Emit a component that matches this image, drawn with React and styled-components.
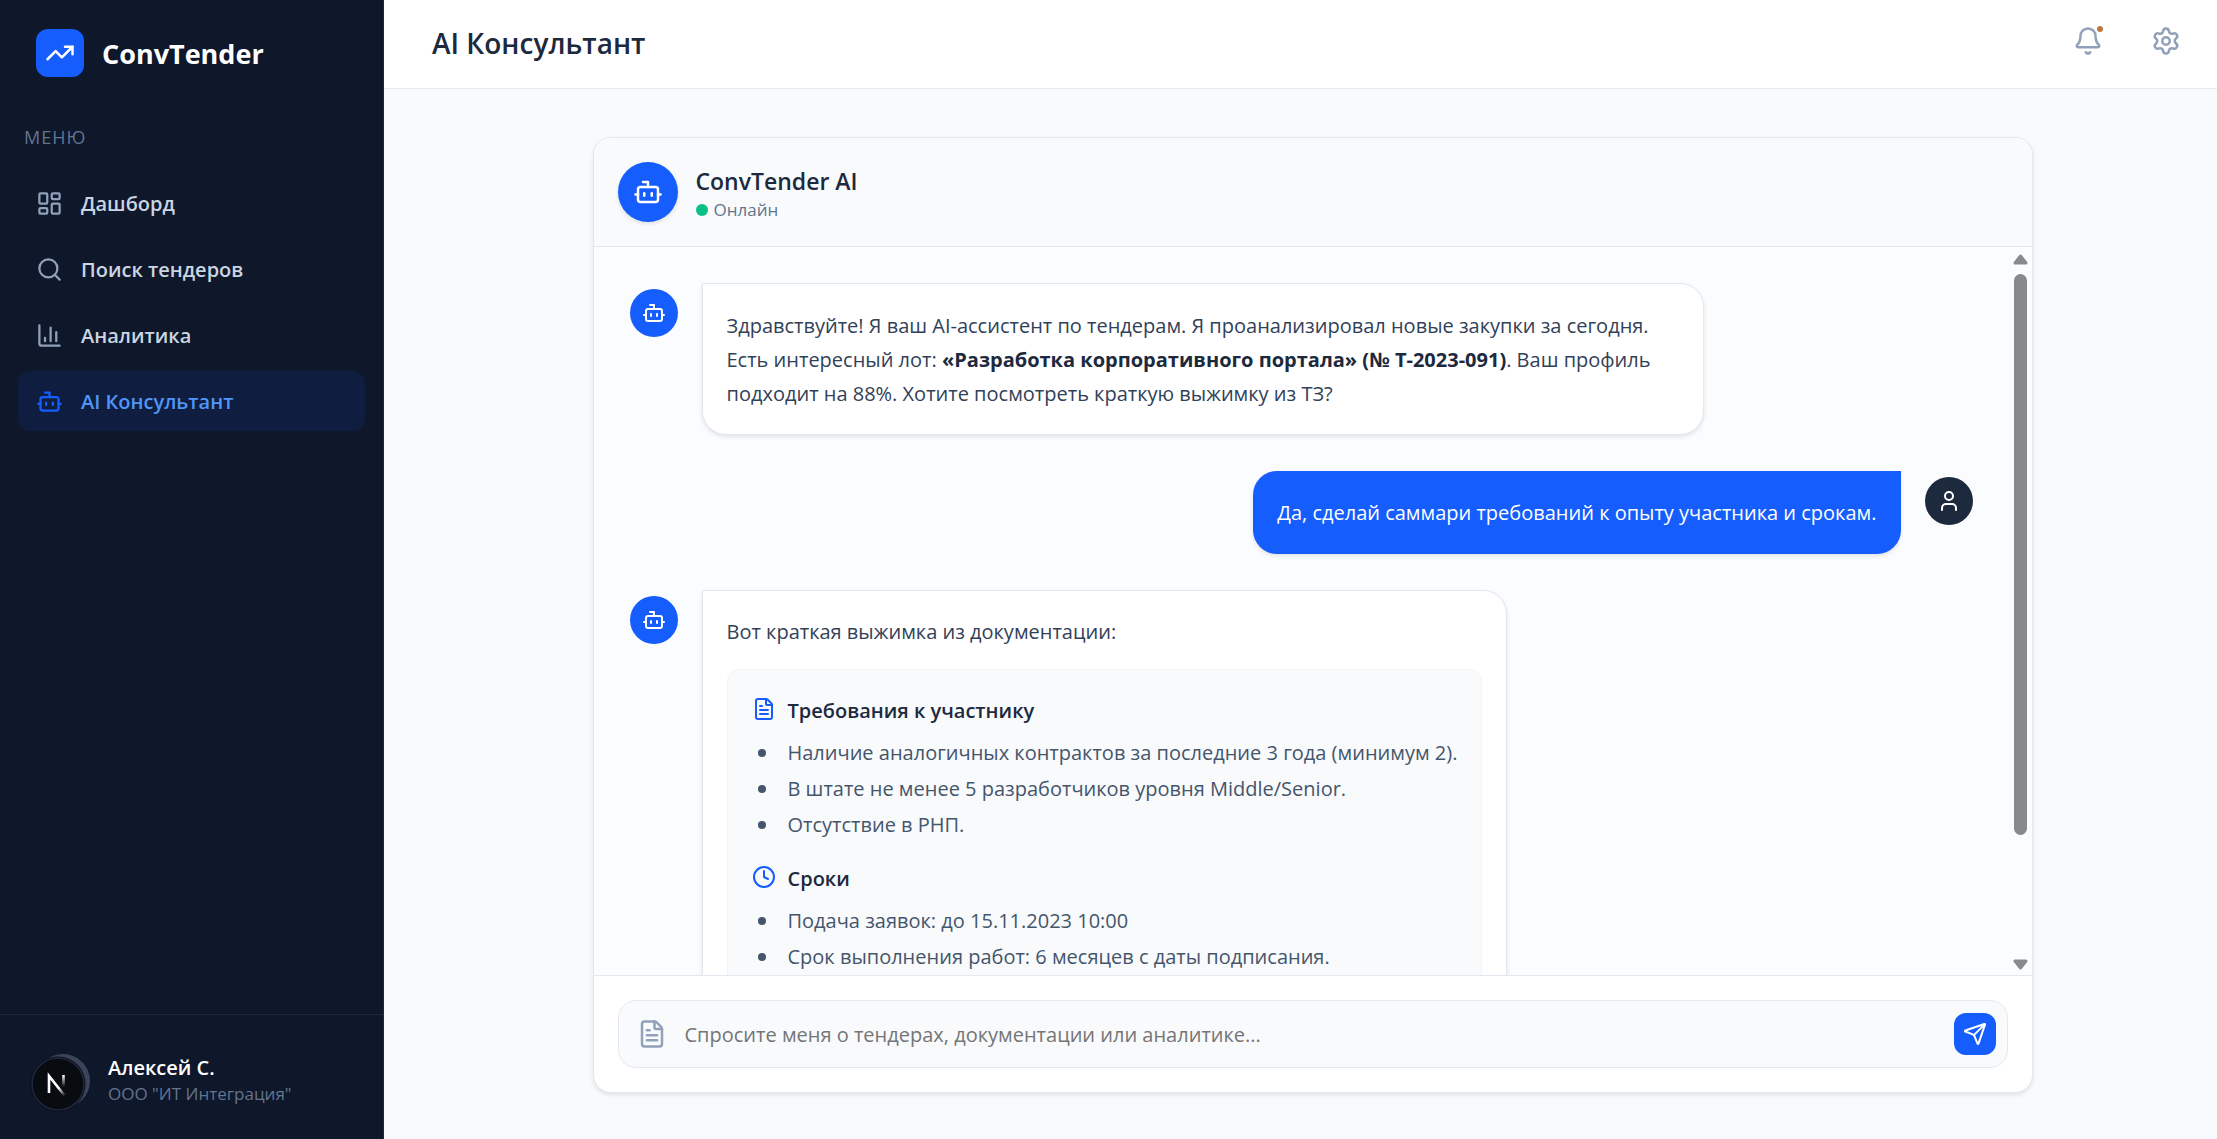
import React from 'react'
import styled, { createGlobalStyle, css } from 'styled-components'
import {
    TrendingUp,
    LayoutDashboard,
    Search,
    ChartColumn,
    Bot,
    Bell,
    Settings,
    FileText,
    Clock,
    User,
    Send,
} from 'lucide-react'

const menu = [
    { label: 'Дашборд', icon: LayoutDashboard },
    { label: 'Поиск тендеров', icon: Search },
    { label: 'Аналитика', icon: ChartColumn },
    { label: 'AI Консультант', icon: Bot, active: true },
]

const summary = [
    {
        title: 'Требования к участнику',
        icon: FileText,
        items: [
            'Наличие аналогичных контрактов за последние 3 года (минимум 2).',
            'В штате не менее 5 разработчиков уровня Middle/Senior.',
            'Отсутствие в РНП.',
        ],
    },
    {
        title: 'Сроки',
        icon: Clock,
        items: [
            'Подача заявок: до 15.11.2023 10:00',
            'Срок выполнения работ: 6 месяцев с даты подписания.',
        ],
    },
]

const Sidebar = () => {
    return (
        <Aside>
            <Brand>
                <BrandIcon>
                    <TrendingUp size={30} />
                </BrandIcon>
                <BrandName>ConvTender</BrandName>
            </Brand>

            <MenuTitle>МЕНЮ</MenuTitle>

            <Nav>
                {menu.map(({ label, icon: Icon, active }) => (
                    <NavLink href="#" key={label} $active={active}>
                        <Icon size={27} />
                        <span>{label}</span>
                    </NavLink>
                ))}
            </Nav>

            <Account>
                <Avatar>
                    <NextBadge>
                        <svg width="56" height="56" viewBox="0 0 56 56" fill="none">
                            <defs>
                                <linearGradient id="diag" x1="26" y1="28" x2="35" y2="40" gradientUnits="userSpaceOnUse">
                                    <stop offset="0.3" stopColor="#fff" />
                                    <stop offset="1" stopColor="#fff" stopOpacity="0" />
                                </linearGradient>
                                <linearGradient id="stem" x1="33" y1="19" x2="33" y2="31" gradientUnits="userSpaceOnUse">
                                    <stop offset="0" stopColor="#fff" />
                                    <stop offset="1" stopColor="#fff" stopOpacity="0" />
                                </linearGradient>
                            </defs>
                            <circle cx="28" cy="28" r="27.5" fill="#080b10" />
                            <circle cx="28" cy="28" r="26" stroke="#1e2840" strokeWidth="1.5" />
                            <path d="M19 37V20L34.5 39.5" stroke="url(#diag)" strokeWidth="2.6" />
                            <path d="M33.5 19V32" stroke="url(#stem)" strokeWidth="2.6" />
                        </svg>
                    </NextBadge>
                </Avatar>
                <div>
                    <AccountName>Алексей С.</AccountName>
                    <AccountOrg>ООО "ИТ Интеграция"</AccountOrg>
                </div>
            </Account>
        </Aside>
    )
}

const Header = () => {
    return (
        <TopBar>
            <h1>AI Консультант</h1>
            <Actions>
                <IconButton type="button" aria-label="Уведомления">
                    <Bell size={30} />
                    <Dot />
                </IconButton>
                <IconButton type="button" aria-label="Настройки">
                    <Settings size={30} />
                </IconButton>
            </Actions>
        </TopBar>
    )
}

const BotAvatar = () => (
    <MessageAvatar>
        <Bot size={24} />
    </MessageAvatar>
)

const Chat = () => {
    return (
        <Card>
            <CardHeader>
                <BigAvatar>
                    <Bot size={30} />
                </BigAvatar>
                <CardTitle>
                    <h2>ConvTender AI</h2>
                    <Status>Онлайн</Status>
                </CardTitle>
            </CardHeader>

            <Body>
                <Messages>
                    <Message>
                        <BotAvatar />
                        <TextBubble>
                            Здравствуйте! Я ваш AI-ассистент по тендерам. Я проанализировал новые закупки за сегодня.
                            Есть интересный лот: <strong>«Разработка корпоративного портала» (№ T-2023-091)</strong>. Ваш
                            профиль подходит на 88%. Хотите посмотреть краткую выжимку из ТЗ?
                        </TextBubble>
                    </Message>

                    <Message $own>
                        <MessageAvatar $own>
                            <User size={24} />
                        </MessageAvatar>
                        <OwnBubble>Да, сделай саммари требований к опыту участника и срокам.</OwnBubble>
                    </Message>

                    <Message>
                        <BotAvatar />
                        <Bubble>
                            <p>Вот краткая выжимка из документации:</p>
                            <Summary>
                                {summary.map(({ title, icon: Icon, items }) => (
                                    <Section key={title}>
                                        <Icon size={24} />
                                        <h3>{title}</h3>
                                        <ul>
                                            {items.map((item) => (
                                                <li key={item}>{item}</li>
                                            ))}
                                        </ul>
                                    </Section>
                                ))}
                            </Summary>
                        </Bubble>
                    </Message>
                </Messages>

                <Scrollbar>
                    <svg width="15" height="11" viewBox="0 0 15 11">
                        <path d="M7.5 2 13 9H2z" fill="#88898c" stroke="#88898c" strokeWidth="3" strokeLinejoin="round" />
                    </svg>
                    <Track>
                        <Thumb />
                    </Track>
                    <svg width="15" height="11" viewBox="0 0 15 11">
                        <path d="M7.5 9 2 2h11z" fill="#88898c" stroke="#88898c" strokeWidth="3" strokeLinejoin="round" />
                    </svg>
                </Scrollbar>
            </Body>

            <Composer>
                <InputBox>
                    <FileText size={30} />
                    <input
                        type="text"
                        aria-label="Сообщение"
                        placeholder="Спросите меня о тендерах, документации или аналитике..."
                    />
                    <SendButton type="button" aria-label="Отправить">
                        <Send size={24} />
                    </SendButton>
                </InputBox>
            </Composer>
        </Card>
    )
}

const App = () => {
    return (
        <>
            <GlobalStyle />
            <Layout>
                <Sidebar />
                <Content>
                    <Header />
                    <Main>
                        <Chat />
                    </Main>
                </Content>
            </Layout>
        </>
    )
}

export default App

const GlobalStyle = createGlobalStyle`
    *{
        box-sizing: border-box;
        margin: 0;
        padding: 0;
    }

    body{
        font-family: "Segoe UI", "Open Sans", "Noto Sans", sans-serif;
        font-size: 20px;
        line-height: 34px;
        color: #314158;
        background-color: #f8fafc;
    }

    button, input{
        font: inherit;
    }

    svg{
        display: block;
        flex-shrink: 0;
    }
`

const Layout = styled.div`
    display: flex;
    height: 100vh;
`

const Aside = styled.aside`
    width: 384px;
    flex-shrink: 0;
    display: flex;
    flex-direction: column;
    background-color: #0f172b;
    border-right: 1px solid #1d293d;
`

const Brand = styled.div`
    display: flex;
    align-items: center;
    gap: 18px;
    padding: 29px 36px 0;
`

const BrandIcon = styled.div`
    width: 48px;
    height: 48px;
    display: flex;
    align-items: center;
    justify-content: center;
    border-radius: 12px;
    background-color: #155dfc;
    color: #fff;
`

const BrandName = styled.span`
    padding-top: 2px;
    font-size: 27px;
    font-weight: 700;
    color: #fff;
`

const MenuTitle = styled.h2`
    padding: 42px 24px 0;
    font-size: 18px;
    line-height: 36px;
    font-weight: 400;
    letter-spacing: 1px;
    color: #62748e;
`

const Nav = styled.nav`
    display: flex;
    flex-direction: column;
    gap: 6px;
    padding: 18px;
`

const NavLink = styled.a`
    display: flex;
    align-items: center;
    gap: 18px;
    height: 60px;
    padding: 0 18px;
    border-radius: 12px;
    font-weight: 600;
    text-decoration: none;
    color: #cad5e2;

    span{
        padding-top: 2px;
    }

    svg{
        color: #90a1b9;
    }

    ${({ $active }) => $active && css`
        background-color: #0f1e40;
        color: #5095fa;

        svg{
            color: #155dfc;
        }
    `}
`

const Account = styled.div`
    display: flex;
    gap: 18px;
    margin-top: auto;
    padding: 39px 36px 31px;
    border-top: 1px solid #1d293d;
`

const Avatar = styled.div`
    position: relative;
    width: 54px;
    height: 54px;
    border-radius: 50%;
    background-color: #3c4459;
`

const NextBadge = styled.div`
    position: absolute;
    left: -6px;
    top: 2px;
`

const AccountName = styled.p`
    line-height: 28px;
    font-weight: 600;
    color: #fff;
`

const AccountOrg = styled.p`
    font-size: 17px;
    line-height: 24px;
    color: #62748e;
`

const Content = styled.div`
    flex: 1;
    min-width: 0;
    display: flex;
    flex-direction: column;
`

const TopBar = styled.header`
    display: flex;
    align-items: center;
    justify-content: space-between;
    padding: 14px 24px 20px 48px;
    border-bottom: 1px solid #e2e8f0;
    background-color: #fff;

    h1{
        padding-top: 4px;
        font-size: 28px;
        font-weight: 600;
        color: #1d293d;
    }
`

const Actions = styled.div`
    display: flex;
    gap: 24px;
`

const IconButton = styled.button`
    position: relative;
    padding: 12px;
    border: none;
    background: none;
    color: #90a1b9;
`

const Dot = styled.span`
    position: absolute;
    top: 12px;
    right: 12px;
    width: 6px;
    height: 6px;
    border-radius: 50%;
    background-color: #bb7a44;
`

const Main = styled.main`
    flex: 1;
    min-height: 0;
    display: flex;
    justify-content: center;
    padding: 48px 24px 46px 48px;
`

const Card = styled.div`
    width: 100%;
    max-width: 1440px;
    display: flex;
    flex-direction: column;
    overflow: hidden;
    border: 1px solid #e2e8f0;
    border-radius: 18px;
    background-color: #fff;
    box-shadow: 0 2px 4px rgba(0,0,0,0.1);
`

const CardHeader = styled.div`
    display: flex;
    align-items: center;
    gap: 18px;
    padding: 24px;
    border-bottom: 1px solid #e2e8f0;
    background-color: #f8fafc;
`

const CardTitle = styled.div`
    padding-top: 2px;

    h2{
        font-size: 23px;
        line-height: 34px;
        font-weight: 600;
        color: #1d293d;
    }
`

const circle = css`
    display: flex;
    align-items: center;
    justify-content: center;
    flex-shrink: 0;
    border-radius: 50%;
    background-color: #155dfc;
    color: #fff;
`

const BigAvatar = styled.div`
    ${circle}
    width: 60px;
    height: 60px;
    box-shadow: 0 2px 4px rgba(0,0,0,0.1);
`

const Status = styled.p`
    display: flex;
    align-items: center;
    gap: 6px;
    font-size: 17px;
    line-height: 24px;
    color: #62748e;

    &::before{
        content: "";
        width: 12px;
        height: 12px;
        border-radius: 50%;
        background-color: #0abf84;
    }
`

const Body = styled.div`
    flex: 1;
    min-height: 0;
    display: flex;
    background-color: #fbfcfe;
`

const Messages = styled.div`
    flex: 1;
    min-width: 0;
    display: flex;
    flex-direction: column;
    gap: 36px;
    padding: 36px;
    overflow-y: auto;
    scrollbar-width: none;
`

const Message = styled.div`
    display: flex;
    flex-shrink: 0;
    align-items: flex-start;
    gap: 24px;
    max-width: 80%;

    ${({ $own }) => $own && css`
        flex-direction: row-reverse;
        align-self: flex-end;
    `}
`

const MessageAvatar = styled.div`
    ${circle}
    width: 48px;
    height: 48px;
    margin-top: 6px;
    ${({ $own }) => $own && 'background-color: #1d293d;'}
`

const Bubble = styled.div`
    padding: 24px;
    border: 1px solid #e2e8f0;
    border-radius: 0 24px 24px 24px;
    background-color: #fff;
    box-shadow: 0 2px 4px rgba(0,0,0,0.1);
`

const TextBubble = styled(Bubble)`
    padding: 25px 24px 23px;

    strong{
        color: #1d293d;
    }
`

const OwnBubble = styled(Bubble)`
    padding: 25px 24px 24px;
    border: none;
    border-radius: 24px 0 24px 24px;
    background-color: #155dfc;
    color: #fff;
`

const Summary = styled.div`
    display: flex;
    flex-direction: column;
    gap: 20px;
    margin-top: 20px;
    padding: 24px;
    border: 1px solid #f1f5f9;
    border-radius: 12px;
    background-color: #f8fafc;
`

const Section = styled.section`
    display: grid;
    grid-template-columns: 24px 1fr;
    column-gap: 12px;
    row-gap: 8px;

    svg{
        margin-top: 3px;
        color: #155dfc;
    }

    h3{
        font-size: 20px;
        font-weight: 600;
        color: #1d293d;
    }

    ul{
        grid-column: 1 / -1;
        display: flex;
        flex-direction: column;
        gap: 2px;
        list-style: none;
    }

    li{
        display: flex;
        align-items: center;
        gap: 22px;
        padding-left: 6px;
        color: #45556c;
    }

    li::before{
        content: "";
        width: 8px;
        height: 8px;
        border-radius: 50%;
        background-color: #45556c;
    }
`

const Scrollbar = styled.div`
    width: 23px;
    display: flex;
    flex-direction: column;
    align-items: center;
    gap: 9px;
    padding: 7px 0 5px;
`

const Track = styled.div`
    flex: 1;
`

const Thumb = styled.div`
    width: 13px;
    height: 83%;
    border-radius: 7px;
    background-color: #88898c;
`

const Composer = styled.div`
    padding: 24px;
    border-top: 1px solid #e2e8f0;
`

const InputBox = styled.div`
    display: flex;
    align-items: center;
    padding: 12px 11px 12px 18px;
    border: 1px solid #e2e8f0;
    border-radius: 18px;
    background-color: #f8fafc;

    > svg{
        color: #90a1b9;
    }

    input{
        flex: 1;
        min-width: 0;
        padding: 2px 18px 0;
        border: none;
        outline: none;
        background: none;
        color: #314158;
    }

    input::placeholder{
        color: #757575;
    }
`

const SendButton = styled.button`
    width: 42px;
    height: 42px;
    display: flex;
    align-items: center;
    justify-content: center;
    border: none;
    border-radius: 12px;
    background-color: #155dfc;
    color: #fff;
`
